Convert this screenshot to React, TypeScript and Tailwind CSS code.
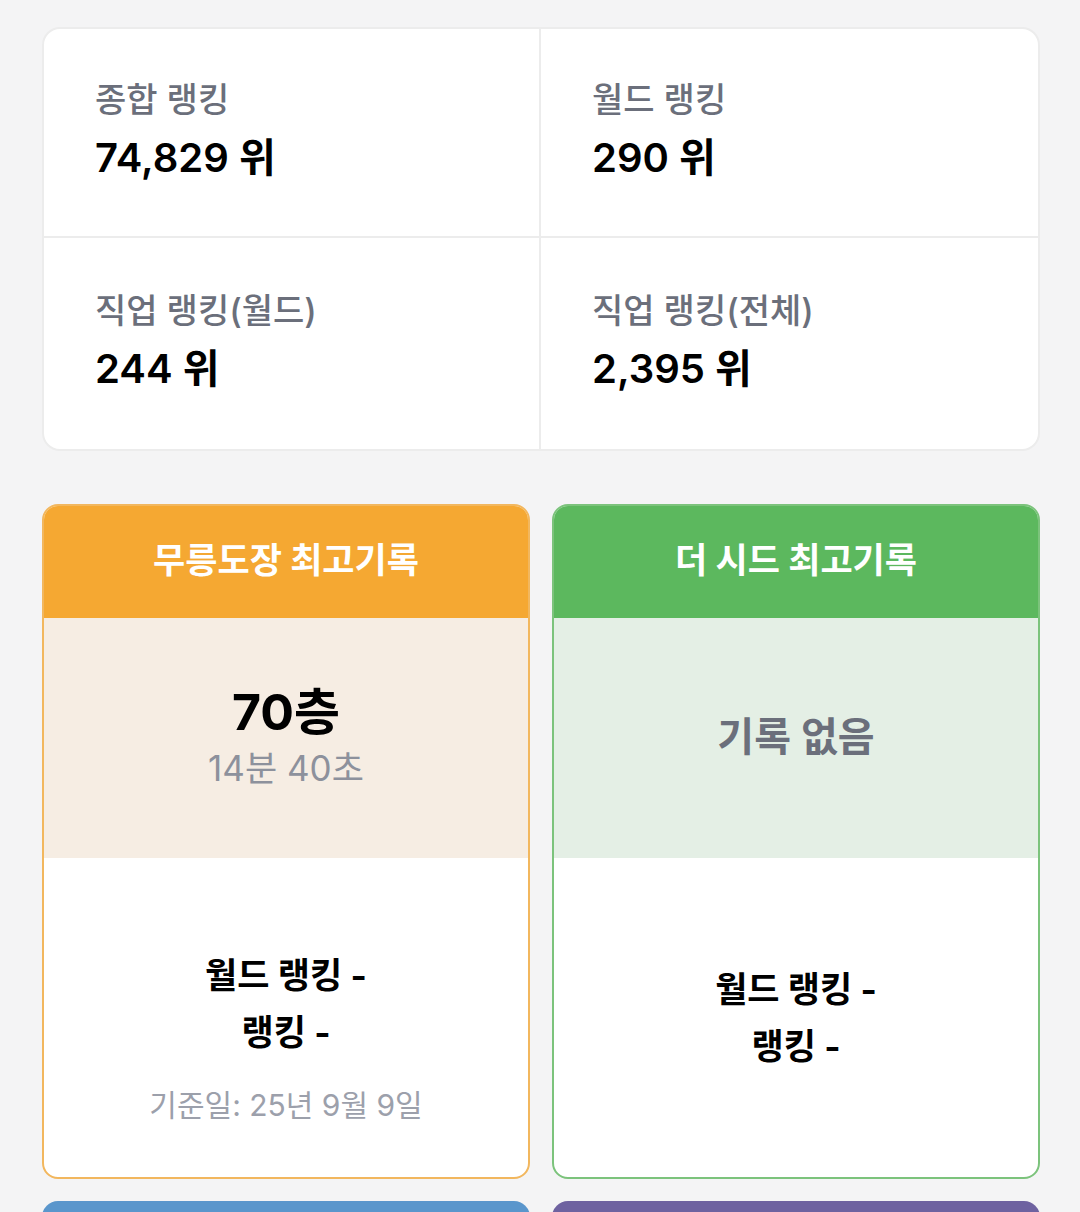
import React from 'react'

const font = "font-['Inter','Noto_Sans_CJK_KR',sans-serif]"

const rankings = [
    { label: '종합 랭킹', value: '74,829 위' },
    { label: '월드 랭킹', value: '290 위' },
    { label: '직업 랭킹(월드)', value: '244 위' },
    { label: '직업 랭킹(전체)', value: '2,395 위' },
]

function RankCell({ label, value, right, bottom }: { label: string, value: string, right?: boolean, bottom?: boolean }) {
    return (
        <div className={`flex flex-col justify-center pl-[51px] ${bottom ? 'h-[211px]' : 'h-[209px] border-b-2 border-[#ececec]'} ${right ? '' : 'border-r-2 border-[#ececec]'}`}>
            <span className='text-[34px] leading-[44px] font-medium text-[#6b6f7b] mt-[-3px]'>{label}</span>
            <span className='text-[40px] leading-[52px] font-semibold text-black mt-[10px]'>{value}</span>
        </div>
    )
}

function RecordCard({ title, header, body, border, children, footer }: {
    title: string, header: string, body: string, border: string, children: React.ReactNode, footer: React.ReactNode
}) {
    return (
        <div className={`flex flex-col rounded-[16px] border-2 overflow-hidden bg-white ${border}`}>
            <div className={`h-[112px] flex items-center justify-center ${header}`}>
                <span className='text-white text-[35px] font-bold mt-[-4px]'>{title}</span>
            </div>
            <div className={`h-[240px] flex flex-col items-center justify-center ${body}`}>
                {children}
            </div>
            <div className='h-[319px] flex flex-col items-center justify-center'>
                {footer}
            </div>
        </div>
    )
}

export default function App() {
    return (
        <div className={`w-[1080px] h-[1212px] overflow-hidden bg-[#f4f4f5] pl-[42px] pr-[40px] pt-[27px] ${font}`}>
            {/* Rankings */}
            <div className='grid grid-cols-2 bg-white rounded-[18px] border-2 border-[#ececec] overflow-hidden'>
                {rankings.map((r, i) => (
                    <RankCell key={i} label={r.label} value={r.value} right={i % 2 === 1} bottom={i >= 2} />
                ))}
            </div>

            {/* Records */}
            <div className='grid grid-cols-2 gap-[22px] mt-[53px]'>
                <RecordCard
                    title='무릉도장 최고기록'
                    header='bg-[#f5a832]'
                    body='bg-[#f6ede3]'
                    border='border-[#f2b75e]'
                    footer={
                        <div className='flex flex-col items-center pt-[36px]'>
                            <span className='text-[35px] leading-[57px] font-bold text-black'>월드 랭킹 -</span>
                            <span className='text-[35px] leading-[57px] font-bold text-black'>랭킹 -</span>
                            <span className='text-[30px] leading-[40px] text-[#9ca0ab] mt-[24px]'>기준일: 25년 9월 9일</span>
                        </div>
                    }
                >
                    <span className='text-[50px] leading-[62px] font-bold text-black mt-[-4px]'>70층</span>
                    <span className='text-[35px] leading-[46px] text-[#8d919c] mt-[2px]'>14분 40초</span>
                </RecordCard>

                <RecordCard
                    title='더 시드 최고기록'
                    header='bg-[#5cb85e]'
                    body='bg-[#e4efe5]'
                    border='border-[#7cc37c]'
                    footer={
                        <div className='flex flex-col items-center'>
                            <span className='text-[35px] leading-[57px] font-bold text-black'>월드 랭킹 -</span>
                            <span className='text-[35px] leading-[57px] font-bold text-black'>랭킹 -</span>
                        </div>
                    }
                >
                    <span className='text-[40px] leading-[52px] font-semibold text-[#6b6f7b] mt-[-2px]'>기록 없음</span>
                </RecordCard>
            </div>

            {/* Next row, cut off */}
            <div className='grid grid-cols-2 gap-[22px] mt-[22px]'>
                <div className='h-[40px] rounded-t-[16px] bg-[#5a96cc]'></div>
                <div className='h-[40px] rounded-t-[16px] bg-[#6e62a0]'></div>
            </div>
        </div>
    )
}
